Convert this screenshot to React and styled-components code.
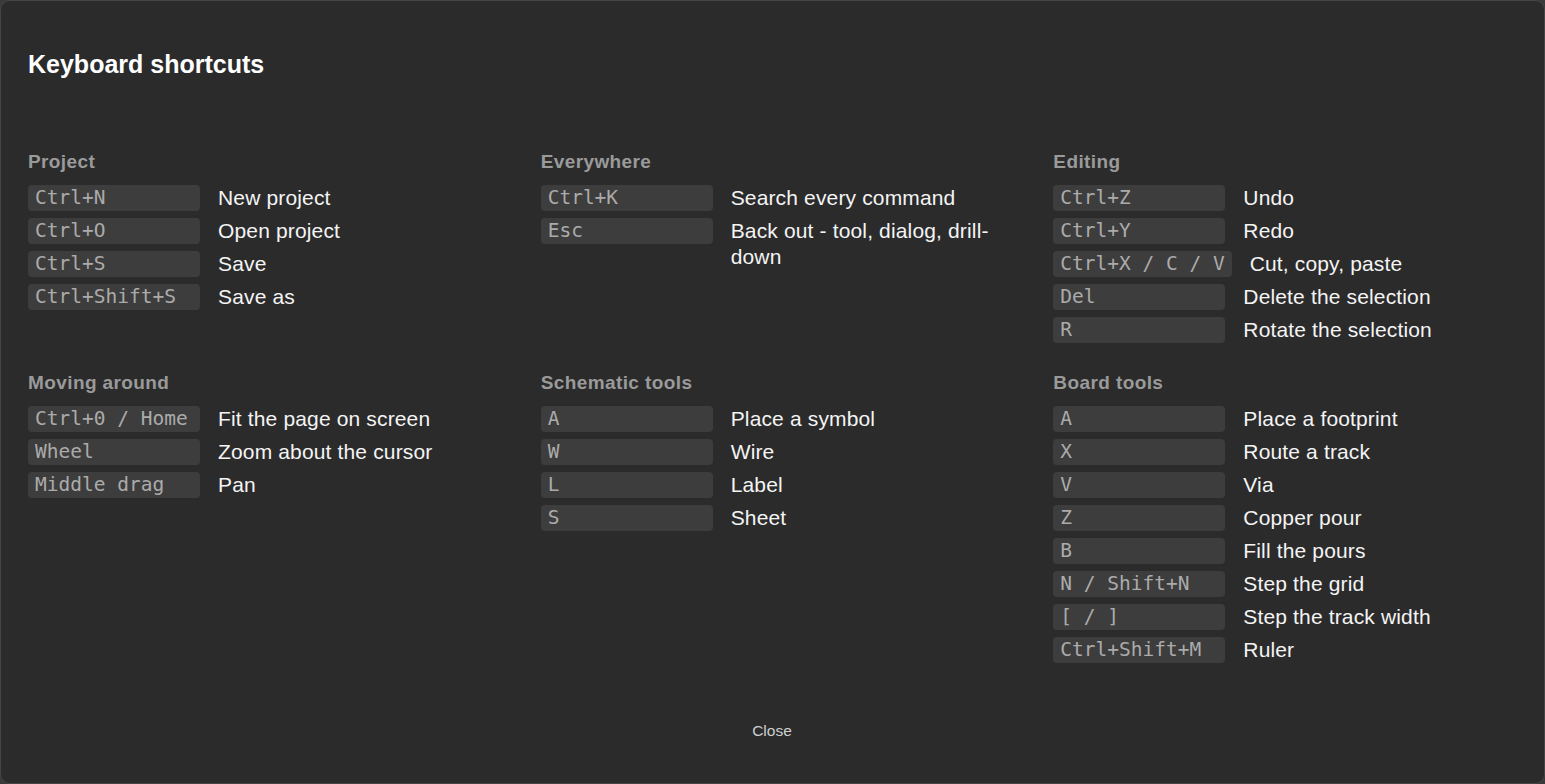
import styled, { createGlobalStyle } from "styled-components"

const GlobalStyle = createGlobalStyle`
  html, body {
    margin: 0;
    padding: 0;
    background: #3a3a3a;
  }

  * {
    box-sizing: border-box;
  }
`

const Dialog = styled.div`
  height: 784px;
  width: 100%;
  background-color: #2b2b2b;
  border: 1px solid #454545;
  border-radius: 10px;
  padding: 49px 28px 0 27px;
  display: flex;
  flex-direction: column;
  font-family: "Liberation Sans", Arial, sans-serif;
`

const Title = styled.h2`
  margin: 0 0 74px 0;
  font-size: 25px;
  line-height: 28px;
  font-weight: 700;
  color: #ffffff;
`

const Sections = styled.div`
  display: grid;
  grid-template-columns: repeat(3, 1fr);
  column-gap: 50px;
  row-gap: 30px;
`

const Section = styled.section`
  display: flex;
  flex-direction: column;
`

const SectionTitle = styled.h3`
  margin: 0 0 13px 0;
  font-size: 19px;
  line-height: 20px;
  letter-spacing: 0.4px;
  font-weight: 700;
  color: #9a9a9a;
`

const Rows = styled.div`
  display: flex;
  flex-direction: column;
  gap: 7px;
`

const Row = styled.div`
  display: flex;
  align-items: flex-start;
  gap: 18px;
`

const Key = styled.kbd`
  flex-shrink: 0;
  min-width: 172px;
  height: 26px;
  padding: 0 7px;
  border-radius: 4px;
  background-color: #3d3d3d;
  color: #ababab;
  font-family: "DejaVu Sans Mono", "Liberation Mono", monospace;
  font-size: 19.5px;
  line-height: 26px;
  white-space: pre;
`

const Label = styled.span`
  font-size: 21px;
  line-height: 26px;
  letter-spacing: 0.15px;
  color: #f4f4f4;
`

const Footer = styled.div`
  margin-top: 51px;
  display: flex;
  justify-content: center;
`

const CloseButton = styled.button`
  background: transparent;
  border: none;
  padding: 8px 16px;
  font-family: "Liberation Sans", Arial, sans-serif;
  font-size: 15.5px;
  line-height: 18px;
  color: #cfcfcf;
  cursor: pointer;

  &:hover {
    color: #ffffff;
  }
`

const groups = [
  {
    title: "Project",
    items: [
      ["Ctrl+N", "New project"],
      ["Ctrl+O", "Open project"],
      ["Ctrl+S", "Save"],
      ["Ctrl+Shift+S", "Save as"],
    ],
  },
  {
    title: "Everywhere",
    items: [
      ["Ctrl+K", "Search every command"],
      ["Esc", "Back out - tool, dialog, drill-down"],
    ],
  },
  {
    title: "Editing",
    items: [
      ["Ctrl+Z", "Undo"],
      ["Ctrl+Y", "Redo"],
      ["Ctrl+X / C / V", "Cut, copy, paste"],
      ["Del", "Delete the selection"],
      ["R", "Rotate the selection"],
    ],
  },
  {
    title: "Moving around",
    items: [
      ["Ctrl+0 / Home", "Fit the page on screen"],
      ["Wheel", "Zoom about the cursor"],
      ["Middle drag", "Pan"],
    ],
  },
  {
    title: "Schematic tools",
    items: [
      ["A", "Place a symbol"],
      ["W", "Wire"],
      ["L", "Label"],
      ["S", "Sheet"],
    ],
  },
  {
    title: "Board tools",
    items: [
      ["A", "Place a footprint"],
      ["X", "Route a track"],
      ["V", "Via"],
      ["Z", "Copper pour"],
      ["B", "Fill the pours"],
      ["N / Shift+N", "Step the grid"],
      ["[ / ]", "Step the track width"],
      ["Ctrl+Shift+M", "Ruler"],
    ],
  },
]

function ShortcutGroup({ title, items }) {
  return (
    <Section>
      <SectionTitle>{title}</SectionTitle>
      <Rows>
        {items.map(([keys, label]) => (
          <Row key={keys + label}>
            <Key>{keys}</Key>
            <Label>{label}</Label>
          </Row>
        ))}
      </Rows>
    </Section>
  )
}

function App() {
  return (
    <>
      <GlobalStyle />
      <Dialog role="dialog">
        <Title>Keyboard shortcuts</Title>
        <Sections>
          {groups.map((g) => (
            <ShortcutGroup key={g.title} title={g.title} items={g.items} />
          ))}
        </Sections>
        <Footer>
          <CloseButton>Close</CloseButton>
        </Footer>
      </Dialog>
    </>
  )
}

export default App
